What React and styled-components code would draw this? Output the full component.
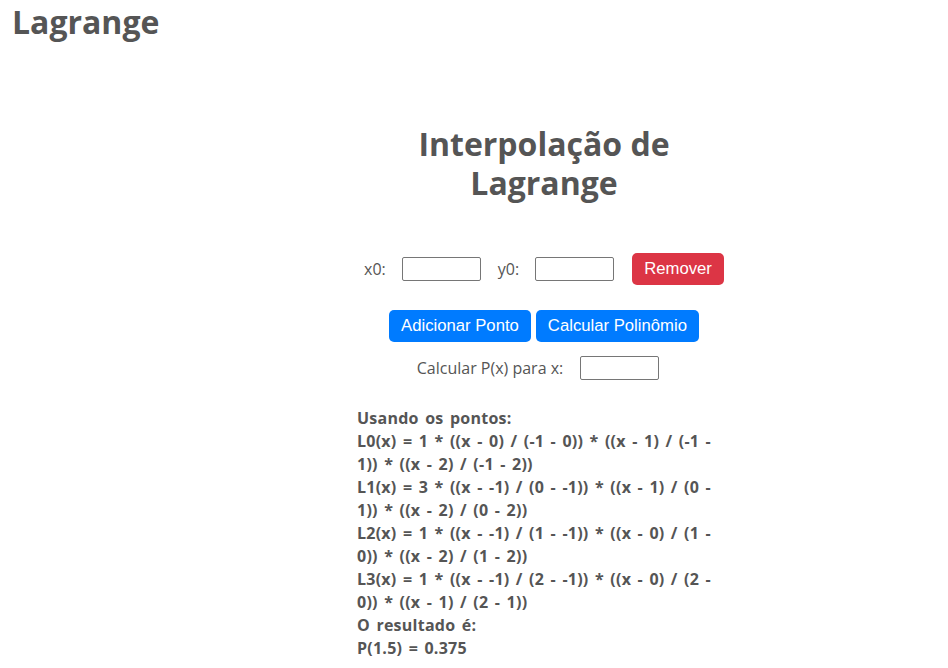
import React from 'react'
import styled, { createGlobalStyle } from 'styled-components'

const GlobalStyle = createGlobalStyle`
  body {
    margin: 0;
    background: #fff;
    color: #555;
    font-family: "Open Sans", "Noto Sans", sans-serif;
  }
`

const Page = styled.div`
  padding: 0 12px;
`

const TopTitle = styled.h1`
  margin: 0;
  padding-top: 2px;
  font-size: 32px;
  line-height: 40px;
  font-weight: 700;
  color: #555;
`

const Box = styled.main`
  width: 374px;
  margin: 82px 0 0 345px;
  display: flex;
  flex-direction: column;
  align-items: center;
`

const Heading = styled.h2`
  margin: 0;
  text-align: center;
  font-size: 32px;
  line-height: 39px;
  font-weight: 700;
  color: #555;
`

const Row = styled.div`
  display: flex;
  align-items: center;
  gap: ${p => p.gap || 0}px;
  margin-top: ${p => p.top || 0}px;
`

const Label = styled.label`
  font-size: 16px;
  color: #555;
  margin: 0 ${p => p.right || 16}px 0 0;
`

const Input = styled.input`
  width: 79px;
  height: 24px;
  box-sizing: border-box;
  border: 1px solid #767676;
  border-radius: 2px;
  padding: 0 4px;
  margin-right: ${p => p.right || 0}px;
`

const Button = styled.button`
  height: 32px;
  padding: 0 12px;
  border: none;
  border-radius: 5px;
  background: ${p => (p.danger ? '#dc3545' : '#007bff')};
  color: #fff;
  font-family: Arial, "Liberation Sans", sans-serif;
  font-size: 16.7px;
  cursor: pointer;
`

const Result = styled.div`
  align-self: flex-start;
  width: 362px;
  margin-top: 27px;
  font-size: 16px;
  line-height: 23px;
  font-weight: 700;
  letter-spacing: 0.25px;
  word-spacing: 2px;
  color: #555;
`

const lines = [
  'Usando os pontos:',
  'L0(x) = 1 * ((x - 0) / (-1 - 0)) * ((x - 1) / (-1 - 1)) * ((x - 2) / (-1 - 2))',
  'L1(x) = 3 * ((x - -1) / (0 - -1)) * ((x - 1) / (0 - 1)) * ((x - 2) / (0 - 2))',
  'L2(x) = 1 * ((x - -1) / (1 - -1)) * ((x - 0) / (1 - 0)) * ((x - 2) / (1 - 2))',
  'L3(x) = 1 * ((x - -1) / (2 - -1)) * ((x - 0) / (2 - 0)) * ((x - 1) / (2 - 1))',
  'O resultado é:',
  'P(1.5) = 0.375',
]

export default function App() {
  return (
    <Page>
      <GlobalStyle />
      <TopTitle>Lagrange</TopTitle>
      <Box>
        <Heading>Interpolação de Lagrange</Heading>
        <Row top={51}>
          <Label right={16}>x0:</Label>
          <Input right={17} />
          <Label right={16}>y0:</Label>
          <Input right={18} />
          <Button danger>Remover</Button>
        </Row>
        <Row top={25} gap={5}>
          <Button>Adicionar Ponto</Button>
          <Button>Calcular Polinômio</Button>
        </Row>
        <Row top={14}>
          <Label right={17}>Calcular P(x) para x:</Label>
          <Input right={12} />
        </Row>
        <Result>
          {lines.map((l, i) => (
            <div key={i}>{l}</div>
          ))}
        </Result>
      </Box>
    </Page>
  )
}
